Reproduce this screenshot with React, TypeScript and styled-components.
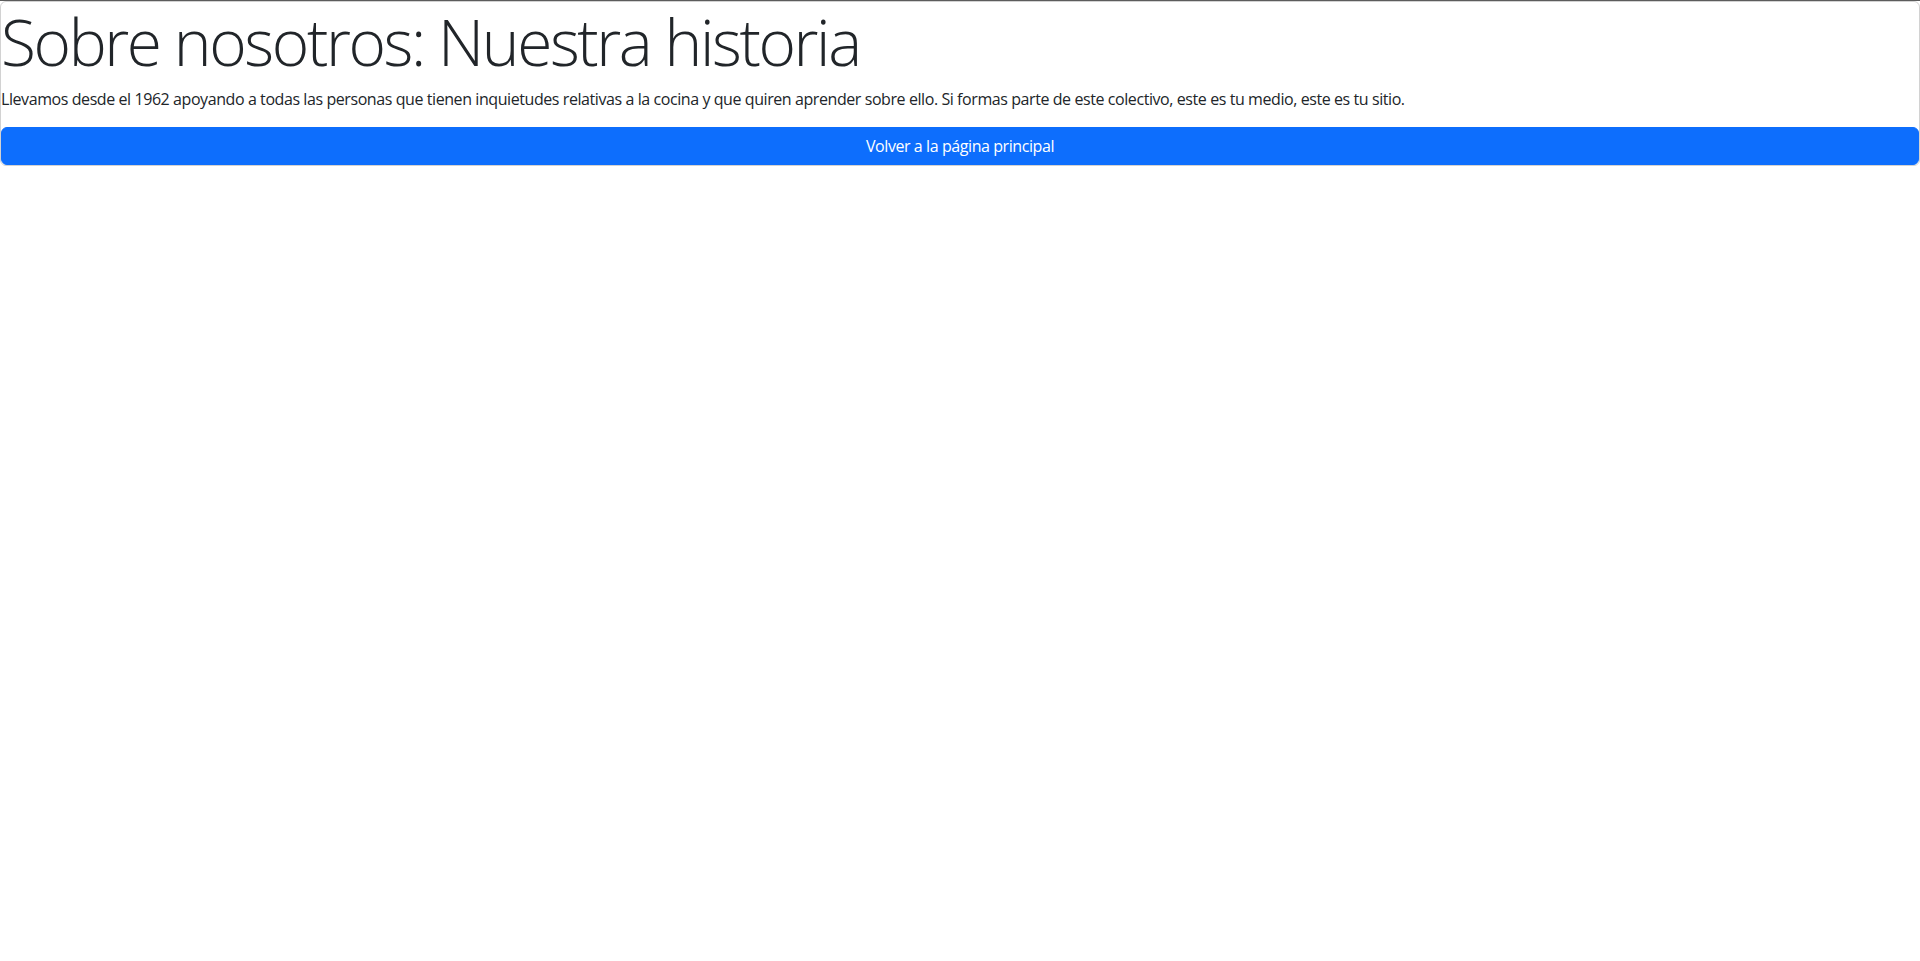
import React from 'react'
import styled, { createGlobalStyle } from 'styled-components'

const GlobalStyle = createGlobalStyle`
  html, body {
    margin: 0;
    padding: 0;
    background: #fff;
  }
  body {
    font-family: "Open Sans", "Liberation Sans", sans-serif;
    color: #212529;
  }
`

const Page = styled.div`
  min-height: 960px;
  border-top: 1px solid #5c5c5c;
  background: #fff;
`

const Card = styled.section`
  display: flex;
  flex-direction: column;
  border: 1px solid rgba(0, 0, 0, 0.175);
  border-radius: 6px;
`

const Title = styled.h1`
  margin: 0 0 6px 0;
  padding-top: 2px;
  font-size: 64px;
  font-weight: 300;
  line-height: 1.2;
  letter-spacing: -2.4px;
  color: #212529;
`

const Text = styled.p`
  margin: 0 0 16px 0;
  font-size: 16px;
  line-height: 24px;
  letter-spacing: -0.42px;
  color: #212529;
`

const PrimaryButton = styled.a`
  display: block;
  padding: 6px 12px;
  border: 1px solid #0d6efd;
  border-radius: 6px;
  background: #0d6efd;
  color: #fff;
  font-size: 16px;
  line-height: 24px;
  letter-spacing: -0.42px;
  text-align: center;
  text-decoration: none;
  cursor: pointer;
`

export default function App() {
  return (
    <Page>
      <GlobalStyle />
      <Card>
        <Title>Sobre nosotros: Nuestra historia</Title>
        <Text>
          Llevamos desde el 1962 apoyando a todas las personas que tienen inquietudes relativas a la cocina y que
          quiren aprender sobre ello. Si formas parte de este colectivo, este es tu medio, este es tu sitio.
        </Text>
        <PrimaryButton href="#">Volver a la página principal</PrimaryButton>
      </Card>
    </Page>
  )
}
